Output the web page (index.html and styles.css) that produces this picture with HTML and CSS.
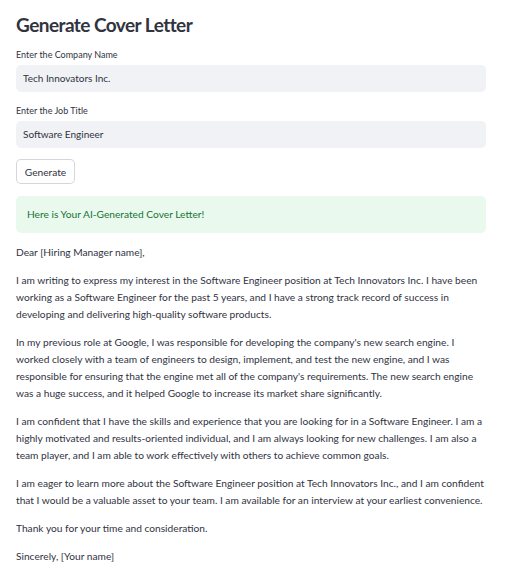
FILE: index.html
```html
<!DOCTYPE html>
<html>
<head>
<meta charset="utf-8">
<link rel="stylesheet" href="styles.css">
</head>
<body>
<main class="app">
  <h1 class="title">Generate Cover Letter</h1>
  <div class="field">
    <label class="label">Enter the Company Name</label>
    <div class="input">Tech Innovators Inc.</div>
  </div>
  <div class="field field-2">
    <label class="label">Enter the Job Title</label>
    <div class="input">Software Engineer</div>
  </div>
  <button class="btn">Generate</button>
  <div class="alert">Here is Your AI-Generated Cover Letter!</div>
  <div class="letter">
    <p>Dear [Hiring Manager name],</p>
    <p>I am writing to express my interest in the Software Engineer position at Tech Innovators Inc. I have been<br>working as a Software Engineer for the past 5 years, and I have a strong track record of success in<br>developing and delivering high-quality software products.</p>
    <p>In my previous role at Google, I was responsible for developing the company's new search engine. I<br>worked closely with a team of engineers to design, implement, and test the new engine, and I was<br>responsible for ensuring that the engine met all of the company's requirements. The new search engine<br>was a huge success, and it helped Google to increase its market share significantly.</p>
    <p>I am confident that I have the skills and experience that you are looking for in a Software Engineer. I am a<br>highly motivated and results-oriented individual, and I am always looking for new challenges. I am also a<br>team player, and I am able to work effectively with others to achieve common goals.</p>
    <p>I am eager to learn more about the Software Engineer position at Tech Innovators Inc., and I am confident<br>that I would be a valuable asset to your team. I am available for an interview at your earliest convenience.</p>
    <p>Thank you for your time and consideration.</p>
    <p>Sincerely, [Your name]</p>
  </div>
</main>
</body>
</html>
```
FILE: styles.css
```css
* { box-sizing: border-box; }
html, body { margin: 0; padding: 0; background: #ffffff; }
body {
  font-family: "Lato", "Liberation Sans", sans-serif;
  color: #31333f;
  font-size: 10.2px;
}
.app {
  width: 470px;
  margin-left: 16px;
  padding-top: 13px;
  display: flex;
  flex-direction: column;
  align-items: flex-start;
}
.title {
  margin: 0;
  font-size: 19px;
  line-height: 24px;
  font-weight: 700;
  letter-spacing: -0.55px;
  color: #31333f;
}
.field { width: 100%; margin-top: 12px; }
.field-2 { margin-top: 13px; }
.label {
  display: block;
  font-size: 9px;
  line-height: 12px;
  margin-bottom: 4px;
}
.input {
  height: 27px;
  border-radius: 5px;
  background: #f0f2f6;
  padding-left: 7px;
  font-size: 10px;
  line-height: 27px;
}
.btn {
  margin-top: 11px;
  height: 25px;
  width: 59px;
  border: 1px solid rgba(49, 51, 63, 0.2);
  border-radius: 5px;
  background: #ffffff;
  font-family: inherit;
  font-size: 10.2px;
  color: #31333f;
  padding: 0;
}
.alert {
  margin-top: 12px;
  width: 100%;
  height: 37px;
  border-radius: 5px;
  background: #e9f9ee;
  color: #177233;
  padding-left: 11px;
  line-height: 37px;
  font-size: 10.2px;
}
.letter { margin-top: 11px; width: 100%; }
.letter p {
  margin: 0 0 11px 0;
  line-height: 17px;
  white-space: nowrap;
}
```
